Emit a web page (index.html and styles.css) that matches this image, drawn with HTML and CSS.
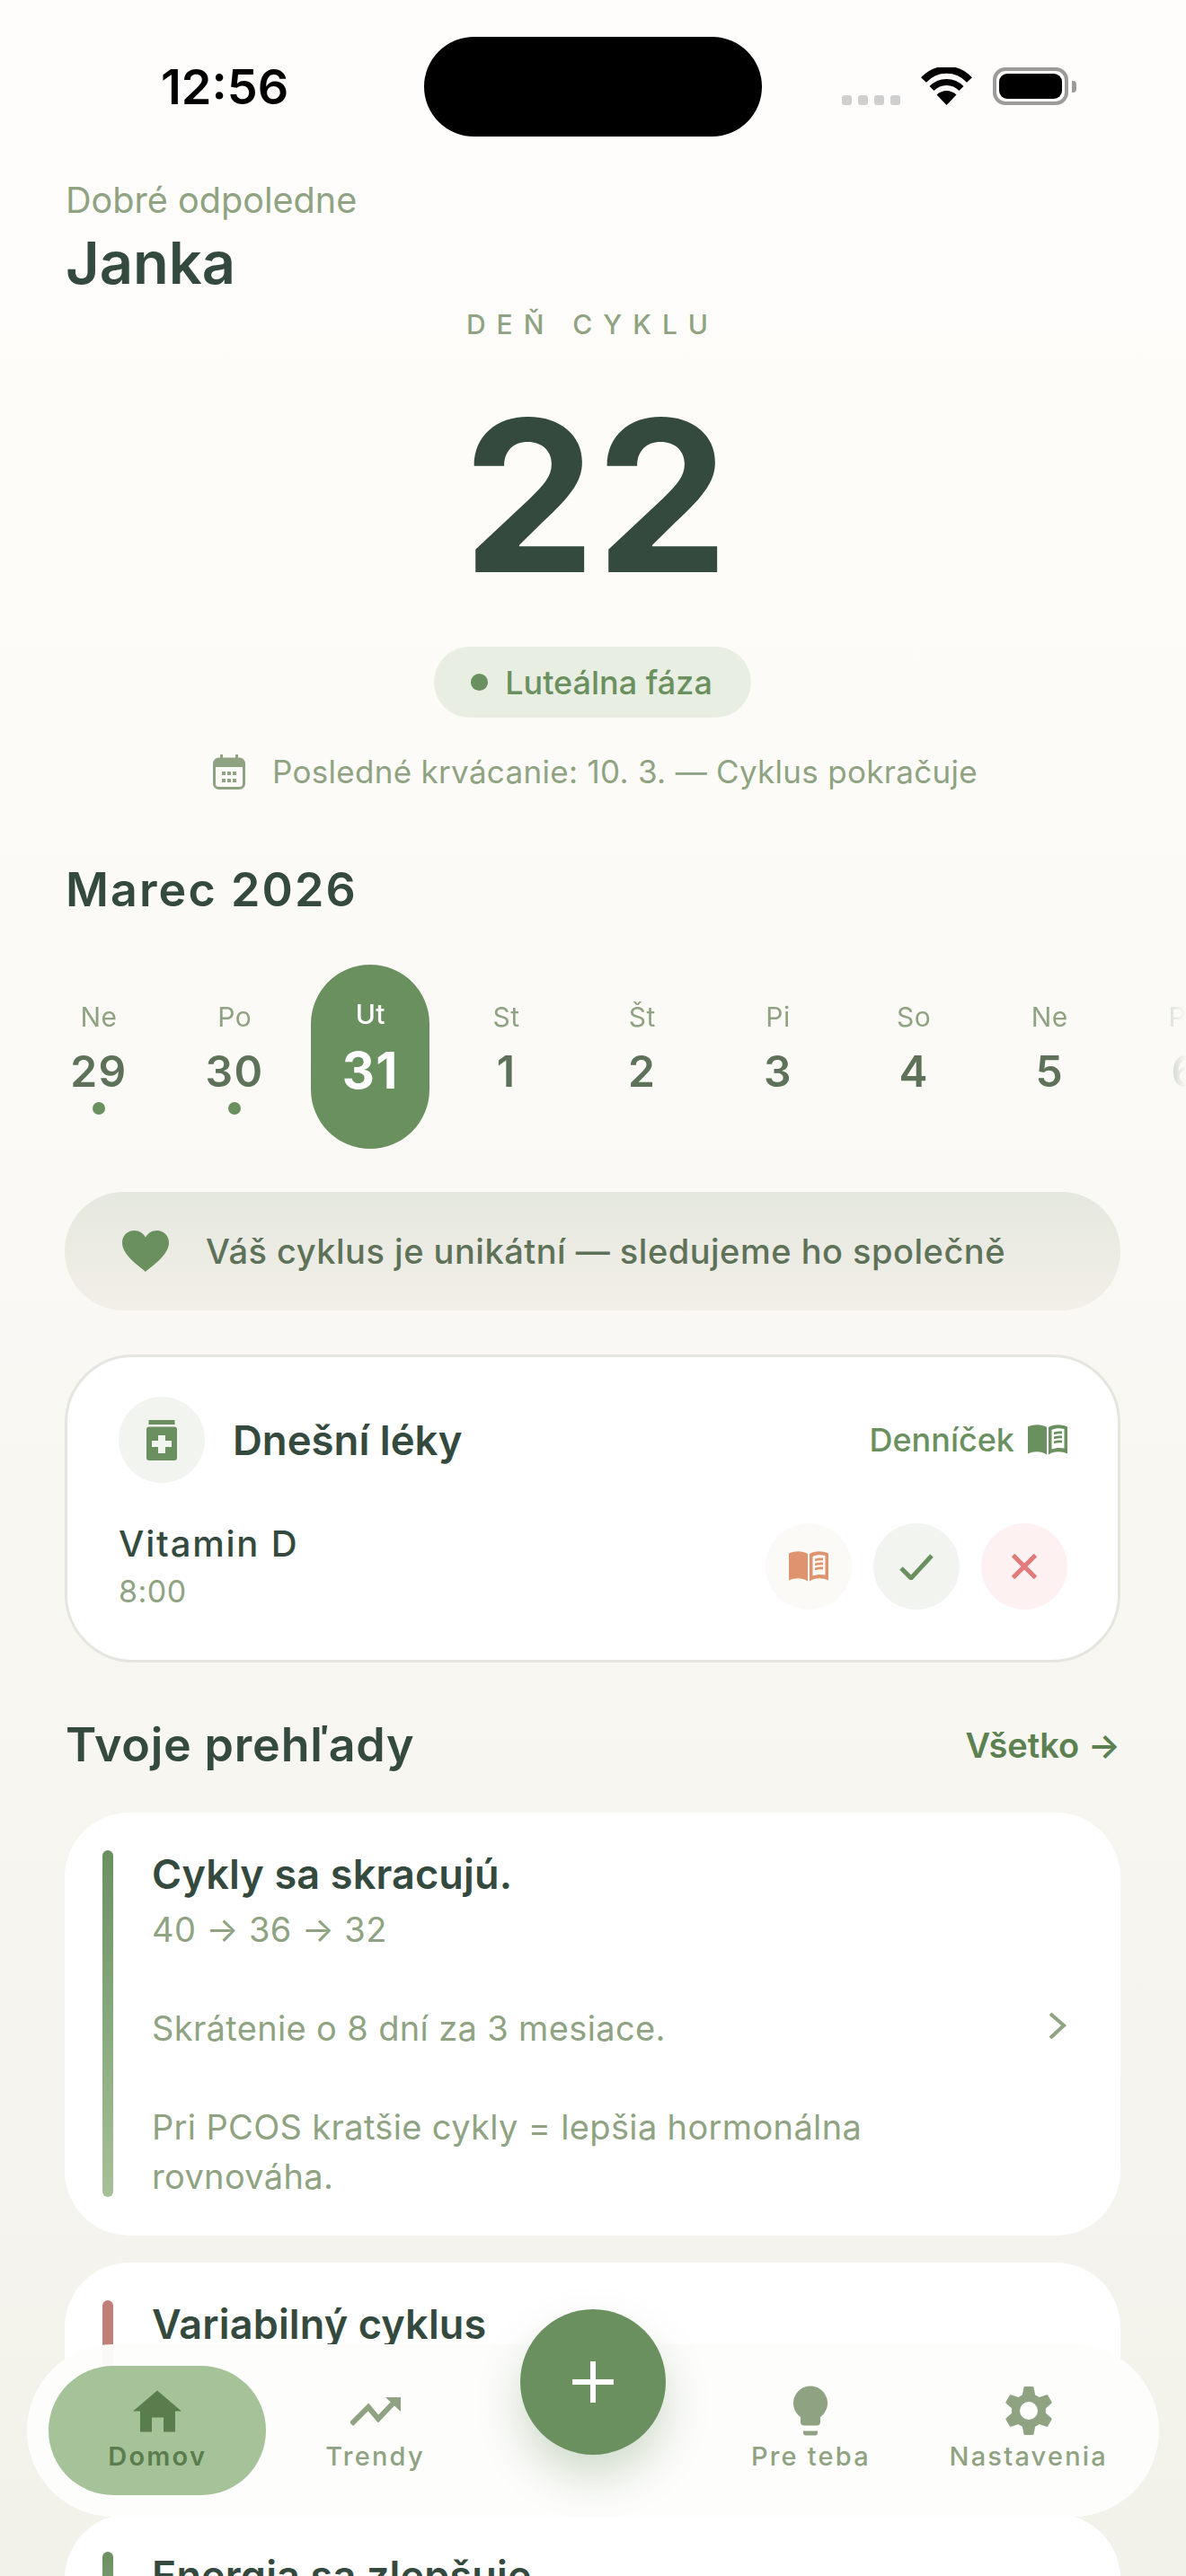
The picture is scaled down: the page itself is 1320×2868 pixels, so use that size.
FILE: index.html
```html
<!DOCTYPE html>
<html lang="sk">
<head>
<meta charset="utf-8">
<title>Domov</title>
<link rel="stylesheet" href="styles.css">
</head>
<body>
<svg class="defs" width="0" height="0" aria-hidden="true">
  <symbol id="book" viewBox="0 0 44 34">
    <path d="M0 2.5C7-.5 15-.5 21 3V33.5C15 29.5 7 29.5 0 32.5Z"/>
    <path fill-rule="evenodd" d="M23 3C29-.5 37-.5 44 2.5V32.5C37 29.5 29 29.5 23 33.5ZM26.500 6V27.500C30 26 36 25.500 40.500 26.500V5C36 3.700 30 4 26.500 6Z"/>
    <path d="M29 8.500C32 7.400 35 7.200 38 7.600V10.400C35 10 32 10.200 29 11.300ZM29 13.500C32 12.400 35 12.200 38 12.600V15.400C35 15 32 15.200 29 16.300ZM29 18.500C32 17.400 35 17.200 38 17.600V20.400C35 20 32 20.200 29 21.300Z"/>
  </symbol>
</svg>

<div class="phone">
  <header class="status">
    <div class="status-time">12:56</div>
    <div class="island"></div>
    <div class="status-icons">
      <span class="signal"><i></i><i></i><i></i><i></i></span>
      <svg class="wifi" viewBox="0 0 57 42">
        <path d="M28.500 42L17.500 30.500C24 24.500 33 24.500 39.500 30.500Z" fill="#000"/>
        <path d="M12 23.500C21 14 36 14 45 23.500" fill="none" stroke="#000" stroke-width="7"/>
        <path d="M3 14C17-1 40-1 54 14" fill="none" stroke="#000" stroke-width="8"/>
      </svg>
      <span class="battery"><i></i></span>
    </div>
  </header>

  <main class="content">
    <p class="greeting">Dobré odpoledne</p>
    <h1 class="name">Janka</h1>

    <section class="cycle">
      <p class="cycle-label">DEŇ CYKLU</p>
      <p class="cycle-day">22</p>
      <p class="phase"><i class="phase-dot"></i>Luteálna fáza</p>
      <p class="last-bleed">
        <svg class="calendar" viewBox="0 0 36 39">
          <rect x="1.500" y="5" width="33" height="32.500" rx="5" fill="none" stroke="currentColor" stroke-width="3"/>
          <path d="M2 6H34V14H2ZM8 0H11V6H8ZM25 0H28V6H25Z" fill="currentColor"/>
          <path d="M10 19h4v4h-4zM16 19h4v4h-4zM22 19h4v4h-4zM10 27h4v4h-4zM16 27h4v4h-4zM22 27h4v4h-4z" fill="currentColor"/>
        </svg>
        Posledné krvácanie: 10. 3. — Cyklus pokračuje
      </p>
    </section>

    <h2 class="month">Marec 2026</h2>
    <div class="week">
      <div class="day"><span class="day-name">Ne</span><span class="day-num">29</span><i class="day-dot"></i></div>
      <div class="day"><span class="day-name">Po</span><span class="day-num">30</span><i class="day-dot"></i></div>
      <div class="day day--today"><span class="day-name">Ut</span><span class="day-num">31</span></div>
      <div class="day"><span class="day-name">St</span><span class="day-num">1</span></div>
      <div class="day"><span class="day-name">Št</span><span class="day-num">2</span></div>
      <div class="day"><span class="day-name">Pi</span><span class="day-num">3</span></div>
      <div class="day"><span class="day-name">So</span><span class="day-num">4</span></div>
      <div class="day"><span class="day-name">Ne</span><span class="day-num">5</span></div>
      <div class="day"><span class="day-name">Po</span><span class="day-num">6</span></div>
    </div>

    <div class="banner">
      <svg class="heart" viewBox="0 0 52 46"><path d="M26 46C20 40 0 28 0 13.500C0 5.500 6 0 13.500 0C19 0 23.500 3 26 7.500C28.500 3 33 0 38.500 0C46 0 52 5.500 52 13.500C52 28 32 40 26 46Z"/></svg>
      <span>Váš cyklus je unikátní — sledujeme ho společně</span>
    </div>

    <section class="meds">
      <div class="meds-head">
        <span class="meds-icon">
          <svg class="jar" viewBox="0 0 34 45">
            <rect x="2.500" y="0" width="29" height="5"/>
            <path fill-rule="evenodd" d="M3 7.500H31Q34 7.500 34 10.500V42Q34 45 31 45H3Q0 45 0 42V10.500Q0 7.500 3 7.500ZM13 17V23H6V30H13V37H21V30H28V23H21V17Z"/>
          </svg>
        </span>
        <h3 class="meds-title">Dnešní léky</h3>
        <a class="diary-link">Denníček<svg class="book book--link"><use href="#book"/></svg></a>
      </div>
      <div class="med">
        <div class="med-text">
          <p class="med-name">Vitamin D</p>
          <p class="med-time">8:00</p>
        </div>
        <span class="med-btn med-btn--note"><svg class="book book--note"><use href="#book"/></svg></span>
        <span class="med-btn med-btn--ok">
          <svg class="check" viewBox="0 0 38 29"><path d="M2 16L13 27L36 2" fill="none" stroke="currentColor" stroke-width="5"/></svg>
        </span>
        <span class="med-btn med-btn--no">
          <svg class="cross" viewBox="0 0 28 28"><path d="M1.500 1.500L26.500 26.500M26.500 1.500L1.500 26.500" fill="none" stroke="currentColor" stroke-width="5"/></svg>
        </span>
      </div>
    </section>

    <div class="section-head">
      <h2 class="section-title">Tvoje prehľady</h2>
      <a class="section-link">Všetko →</a>
    </div>

    <div class="insights">
      <article class="insight">
        <i class="insight-bar"></i>
        <div class="insight-text">
          <h3 class="insight-title">Cykly sa skracujú.</h3>
          <p class="insight-body">40 → 36 → 32

Skrátenie o 8 dní za 3 mesiace.

Pri PCOS kratšie cykly = lepšia hormonálna rovnováha.</p>
        </div>
        <svg class="chevron" viewBox="0 0 20 32"><path d="M2 2L17 15L2 29" fill="none" stroke="currentColor" stroke-width="4"/></svg>
      </article>
      <article class="insight insight--short">
        <i class="insight-bar insight-bar--warn"></i>
        <div class="insight-text"><h3 class="insight-title">Variabilný cyklus</h3></div>
      </article>
      <article class="insight insight--short">
        <i class="insight-bar"></i>
        <div class="insight-text"><h3 class="insight-title">Energia sa zlepšuje</h3></div>
      </article>
    </div>
  </main>

  <nav class="tabbar">
    <a class="tab tab--active">
      <svg class="tab-icon" width="56" viewBox="0 0 56 47"><path d="M28 1L55 24H48V47H35V31H22V47H9V24H1Z"/></svg>
      <span>Domov</span>
    </a>
    <a class="tab">
      <svg class="tab-icon" width="56" viewBox="0 0 56 32"><path d="M1 31L20 12L31 25L50 5" fill="none" stroke="currentColor" stroke-width="6"/><path d="M39 1H56V17Z"/></svg>
      <span>Trendy</span>
    </a>
    <span class="tab-gap"></span>
    <a class="tab">
      <svg class="tab-icon" width="38" viewBox="0 0 38 55"><path d="M19 0A19 19 0 0 1 30 34.500V40Q30 44 26 44H12Q8 44 8 40V34.500A19 19 0 0 1 19 0Z"/><path d="M11 50H27V52Q27 55 24 55H14Q11 55 11 52Z"/></svg>
      <span>Pre teba</span>
    </a>
    <a class="tab">
      <svg class="tab-icon" width="52" viewBox="0 0 52 54">
        <path fill-rule="evenodd" d="M26 8A19 19 0 1 0 26 46A19 19 0 1 0 26 8ZM26 17A10 10 0 1 1 26 37A10 10 0 1 1 26 17Z"/>
        <path d="M20.500 1Q20.700 0 22 0H30Q31.300 0 31.500 1L33.500 11H18.500Z"/>
        <path transform="rotate(60 26 27)" d="M20.500 1Q20.700 0 22 0H30Q31.300 0 31.500 1L33.500 11H18.500Z"/>
        <path transform="rotate(120 26 27)" d="M20.500 1Q20.700 0 22 0H30Q31.300 0 31.500 1L33.500 11H18.500Z"/>
        <path transform="rotate(180 26 27)" d="M20.500 1Q20.700 0 22 0H30Q31.300 0 31.500 1L33.500 11H18.500Z"/>
        <path transform="rotate(240 26 27)" d="M20.500 1Q20.700 0 22 0H30Q31.300 0 31.500 1L33.500 11H18.500Z"/>
        <path transform="rotate(300 26 27)" d="M20.500 1Q20.700 0 22 0H30Q31.300 0 31.500 1L33.500 11H18.500Z"/>
      </svg>
      <span>Nastavenia</span>
    </a>
  </nav>
  <button class="fab" type="button" aria-label="Pridať"><svg viewBox="0 0 46 46" width="46" height="46"><path d="M20 0H26V20H46V26H26V46H20V26H0V20H20Z" fill="#fff"/></svg></button>
</div>
</body>
</html>
```

FILE: styles.css
```css
* { box-sizing: border-box; }

html, body { margin: 0; padding: 0; }

body {
  font-family: "Inter", "Liberation Sans", sans-serif;
  color: #354a3e;
}

p, h1, h2, h3 { margin: 0; font-weight: inherit; }

.defs { position: absolute; }

.phone {
  position: relative;
  width: 1320px;
  height: 2868px;
  overflow: hidden;
  background: linear-gradient(180deg, #fefdfb 0%, #fcfbf7 30%, #f7f6f1 68%, #f2f2eb 100%);
}

/* status bar */
.status {
  display: grid;
  grid-template-columns: 472px 376px 472px;
  align-items: start;
  height: 199px;
}

.status-time {
  padding: 67px 0 0 179px;
  font-size: 54px;
  line-height: 60px;
  font-weight: 600;
  color: #000;
}

.island {
  height: 111px;
  margin-top: 41px;
  border-radius: 56px;
  background: #000;
}

.status-icons {
  display: flex;
  align-items: flex-end;
  height: 42px;
  margin-top: 75px;
  padding-left: 89px;
}

.signal { display: flex; gap: 7px; }

.signal i {
  width: 11px;
  height: 11px;
  border-radius: 3px;
  background: #cfcfcf;
}

.wifi { width: 57px; height: 42px; margin-left: 23px; }

.battery {
  position: relative;
  display: block;
  width: 84px;
  height: 42px;
  margin-left: 23px;
  padding: 3px;
  border: 4px solid #9b9b9b;
  border-radius: 14px;
}

.battery i {
  display: block;
  height: 100%;
  border-radius: 9px;
  background: #000;
}

.battery::after {
  content: "";
  position: absolute;
  left: 84px;
  top: 11px;
  width: 5px;
  height: 13px;
  border-radius: 0 4px 4px 0;
  background: #9b9b9b;
}

/* greeting and cycle summary */
.content { padding: 0 73px 0 72px; }

.greeting {
  padding-left: 1px;
  font-size: 39.600px;
  line-height: 48px;
  color: #8fa382;
}

.name {
  margin-top: 8px;
  padding-left: 1px;
  font-size: 65px;
  line-height: 76px;
  font-weight: 600;
}

.cycle {
  display: flex;
  flex-direction: column;
  align-items: center;
}

.cycle-label {
  margin-top: 14px;
  font-size: 30px;
  line-height: 32px;
  font-weight: 500;
  letter-spacing: 12px;
  color: #8fa382;
}

.cycle-day {
  margin-top: 52px;
  padding-left: 7px;
  font-size: 235px;
  line-height: 246px;
  font-weight: 700;
}

.phase {
  display: flex;
  align-items: center;
  gap: 19px;
  height: 79px;
  margin-top: 45px;
  padding: 0 43px 0 41px;
  border-radius: 40px;
  background: #e9eee3;
  font-size: 36px;
  font-weight: 500;
  color: #6b9060;
}

.phase-dot {
  width: 19px;
  height: 19px;
  border-radius: 50%;
  background: #6b9060;
}

.last-bleed {
  display: flex;
  align-items: center;
  justify-content: center;
  gap: 30px;
  height: 44px;
  margin-top: 38px;
  padding-left: 6px;
  font-size: 35px;
  letter-spacing: .3px;
  color: #8fa382;
}

.calendar { width: 36px; height: 39px; }

/* month strip */
.month {
  margin-top: 79px;
  padding-left: 1px;
  font-size: 52px;
  line-height: 62px;
  font-weight: 600;
  letter-spacing: 2.100px;
}

.week {
  display: flex;
  align-items: center;
  gap: 19.200px;
  height: 205px;
  margin: 52px -73px 0 -72px;
  padding-left: 44px;
  overflow: hidden;
  -webkit-mask-image: linear-gradient(90deg, #000 95%, transparent 100%);
  mask-image: linear-gradient(90deg, #000 95%, transparent 100%);
}

.day {
  position: relative;
  flex: 0 0 132px;
  display: flex;
  flex-direction: column;
  align-items: center;
  height: 192px;
  padding-top: 33px;
  border-radius: 66px;
  background: rgba(255, 255, 255, .14);
}

.day-name {
  font-size: 30px;
  line-height: 36px;
  letter-spacing: .5px;
  color: #8fa382;
}

.day-num {
  margin-top: 14px;
  font-size: 48px;
  line-height: 58px;
  font-weight: 600;
  letter-spacing: 1.500px;
  color: #5e7259;
}

.day-dot {
  width: 14px;
  height: 14px;
  margin-top: 5px;
  border-radius: 50%;
  background: #6b9060;
}

.day--today {
  height: 205px;
  padding-top: 37px;
  background: #6b9060;
}

.day--today .day-name { font-weight: 500; color: #fff; }

.day--today .day-num {
  margin-top: 16px;
  font-size: 56px;
  font-weight: 700;
  color: #fff;
}

/* encouragement banner */
.banner {
  display: flex;
  align-items: center;
  height: 132px;
  margin-top: 48px;
  padding-left: 64px;
  border-radius: 66px;
  background: linear-gradient(180deg, #e5e8df, #f2efe8);
  font-size: 38px;
  font-weight: 500;
  letter-spacing: .5px;
  color: #5e7259;
}

.heart {
  width: 52px;
  height: 46px;
  margin-right: 41px;
  fill: #6b9060;
}

/* today's medication card */
.meds {
  height: 343px;
  margin-top: 49px;
  padding: 44px 56px 0 57px;
  border: 3px solid #e5e6e0;
  border-radius: 76px;
  background: #fff;
}

.meds-head { display: flex; align-items: center; }

.meds-icon {
  display: flex;
  align-items: center;
  justify-content: center;
  width: 96px;
  height: 96px;
  border-radius: 50%;
  background: #f1f4ef;
}

.jar { width: 34px; height: 45px; fill: #6b9060; }

.meds-title {
  flex: 1;
  margin-left: 31px;
  font-size: 45.500px;
  font-weight: 600;
}

.diary-link {
  display: flex;
  align-items: center;
  gap: 15px;
  font-size: 36px;
  font-weight: 500;
  color: #6b9060;
}

.book { display: block; width: 44px; height: 34px; }
.book--link { fill: #6b9060; }
.book--note { fill: #df9470; }

.med {
  display: flex;
  align-items: center;
  gap: 24px;
  margin-top: 44px;
}

.med-text { flex: 1; }

.med-name {
  font-size: 40px;
  line-height: 48px;
  font-weight: 500;
  letter-spacing: 1.800px;
}

.med-time {
  margin-top: 8px;
  font-size: 34px;
  line-height: 42px;
  letter-spacing: .5px;
  color: #8fa382;
}

.med-btn {
  display: flex;
  align-items: center;
  justify-content: center;
  width: 96px;
  height: 96px;
  border-radius: 50%;
}

.med-btn--note { background: #fbfaf6; }
.med-btn--ok { background: #f1f4ef; color: #6b9060; }
.med-btn--no { background: #fdf1f1; color: #e27a7a; }

.check { width: 38px; height: 29px; }
.cross { width: 28px; height: 28px; }

/* insights list */
.section-head {
  display: flex;
  align-items: center;
  justify-content: space-between;
  margin-top: 61px;
  padding-left: 1px;
}

.section-title {
  font-size: 52px;
  line-height: 62px;
  font-weight: 600;
  letter-spacing: .8px;
}

.section-link {
  font-size: 38px;
  font-weight: 600;
  color: #5c8151;
}

.insights {
  display: flex;
  flex-direction: column;
  gap: 30px;
  margin-top: 44px;
}

.insight {
  display: flex;
  align-items: stretch;
  padding: 42px 60px 38px 42px;
  border-radius: 72px;
  background: #fff;
}

.insight--short { min-height: 250px; }

.insight-bar {
  flex: 0 0 12px;
  margin: 0 43px 5px 0;
  border-radius: 6px;
  background: linear-gradient(180deg, #6b9060, #a5c199);
}

.insight-bar--warn { background: #c07f77; }

.insight-text { flex: 1; }

.insight-title {
  font-size: 45px;
  line-height: 54px;
  font-weight: 600;
  letter-spacing: .15px;
}

.insight-body {
  margin-top: 7px;
  font-size: 38px;
  line-height: 55px;
  letter-spacing: .35px;
  color: #8fa382;
  white-space: pre-line;
}

.chevron {
  flex: 0 0 20px;
  align-self: center;
  height: 32px;
  margin-left: 30px;
  color: #8fa382;
}

/* bottom navigation, floating over the scrolled content */
.tabbar {
  position: absolute;
  left: 30px;
  top: 2610px;
  display: grid;
  grid-template-columns: repeat(5, 242.400px);
  width: 1260px;
  height: 192px;
  padding: 24px;
  border-radius: 96px;
  background: rgba(253, 253, 251, .97);
}

.tab {
  display: flex;
  flex-direction: column;
  align-items: center;
  height: 144px;
  padding-top: 20px;
  border-radius: 72px;
  color: #8fa382;
  fill: currentColor;
  font-size: 29px;
  line-height: 36px;
  font-weight: 500;
  letter-spacing: 2.200px;
}

.tab-icon { display: block; height: 60px; margin-bottom: 3px; }

.tab--active {
  background: #a5c299;
  color: #5a7d4e;
  font-weight: 600;
}

.fab {
  position: absolute;
  left: 579px;
  top: 2571px;
  display: flex;
  align-items: center;
  justify-content: center;
  width: 162px;
  height: 162px;
  padding: 0;
  border: 0;
  border-radius: 50%;
  background: #6b9060;
  box-shadow: 0 24px 48px rgba(107, 144, 96, .3);
}
```
